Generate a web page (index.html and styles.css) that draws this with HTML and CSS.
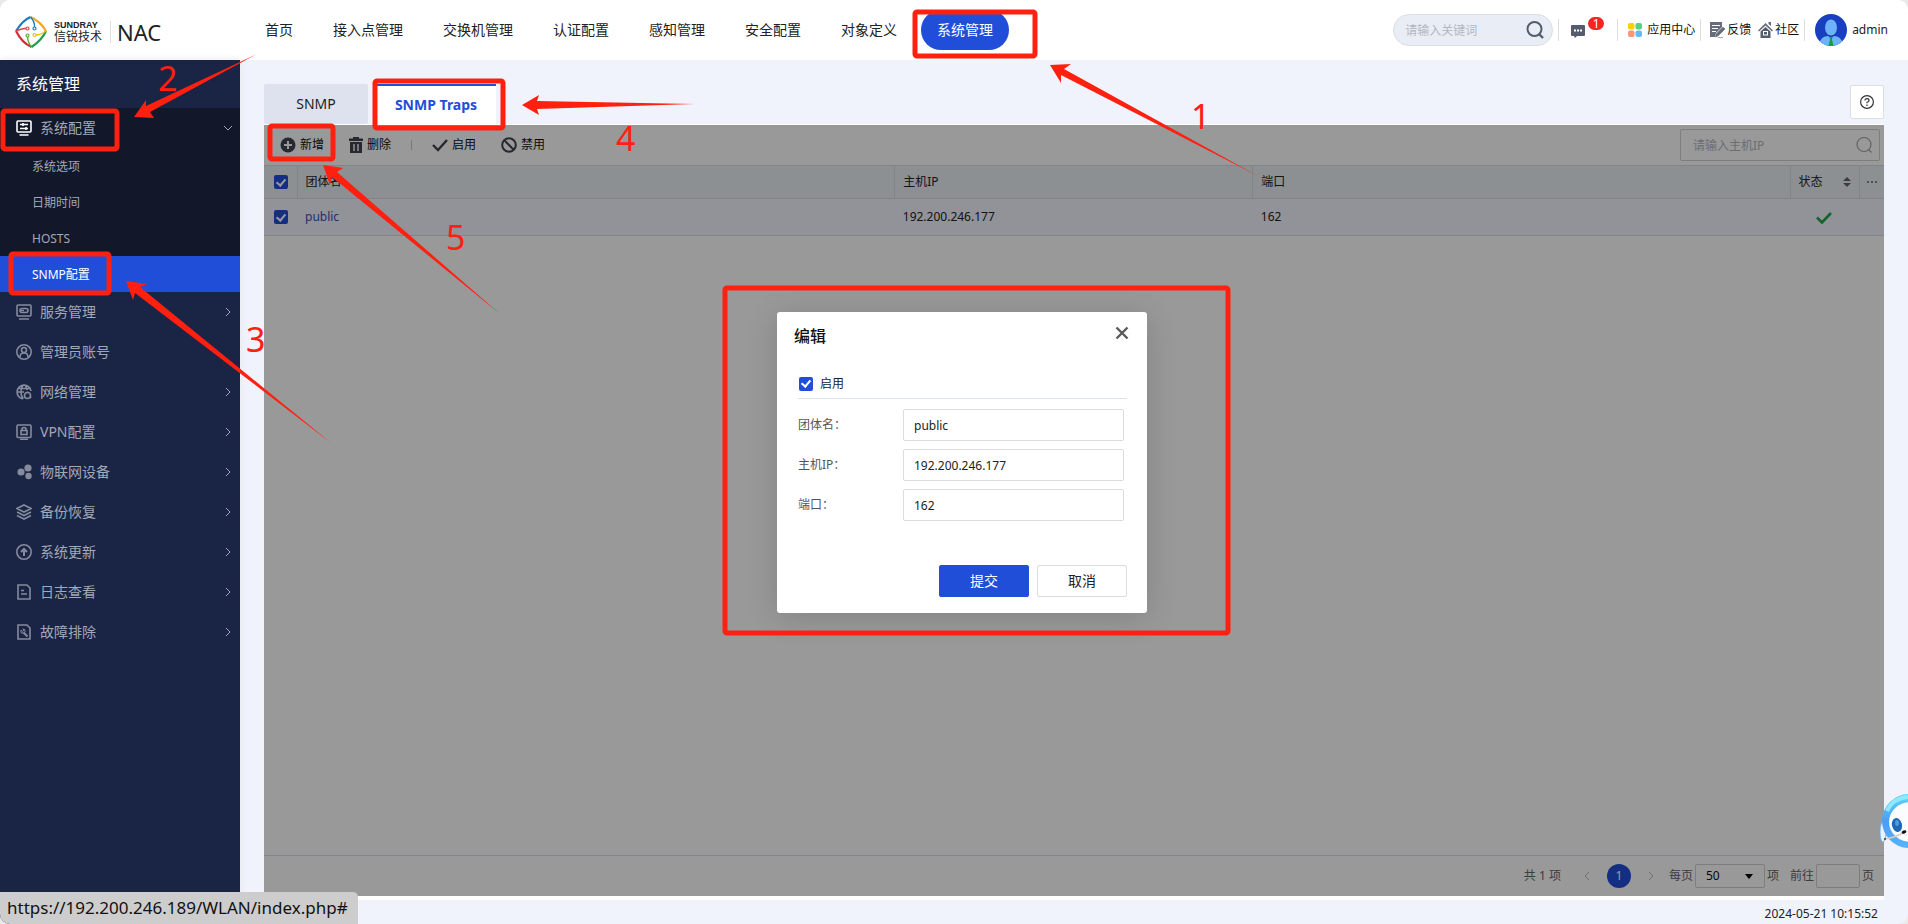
FILE: index.html
```html
<!DOCTYPE html>
<html lang="zh-CN">
<head>
<meta charset="utf-8">
<title>NAC</title>
<link rel="stylesheet" href="styles.css">
</head>
<body>
<div class="app">
  <header class="topbar">
    <div class="brand">
      <svg class="brand-mark" viewBox="0 0 32 32" fill="none" stroke-width="2.200">
        <path d="M1 15Q8 4 15.500 1" stroke="#1a7dc4"/>
        <path d="M15.500 1Q25 5 31 15" stroke="#f2a81d"/>
        <path d="M31 15Q27 24 16.500 31" stroke="#1f9d4d"/>
        <path d="M16.500 31Q7 27 1 15" stroke="#d22c3c"/>
        <path d="M1 15Q7 12 11 12.500" stroke="#e0453a" stroke-width="1.400"/><circle cx="12.500" cy="12.500" r="1.500" stroke="#e0453a" stroke-width="1.200"/>
        <path d="M15.500 1Q20 6 19.500 11" stroke="#1a7dc4" stroke-width="1.400"/><circle cx="19.500" cy="12.500" r="1.500" stroke="#1a7dc4" stroke-width="1.200"/>
        <path d="M31 15Q26 19 21 19" stroke="#e8c11d" stroke-width="1.400"/><circle cx="19.500" cy="19" r="1.500" stroke="#e8c11d" stroke-width="1.200"/>
        <path d="M16.500 31Q13 27 12.500 21" stroke="#4fae3c" stroke-width="1.400"/><circle cx="12.500" cy="19.500" r="1.500" stroke="#4fae3c" stroke-width="1.200"/>
      </svg>
      <div class="brand-name"><span class="brand-en">SUNDRAY</span><span class="brand-cn">信锐技术</span></div>
      <span class="brand-product">NAC</span>
    </div>
    <nav class="nav">
      <a href="#">首页</a><a href="#">接入点管理</a><a href="#">交换机管理</a><a href="#">认证配置</a><a href="#">感知管理</a><a href="#">安全配置</a><a href="#">对象定义</a><a href="#" class="current">系统管理</a>
    </nav>
    <div class="tools">
      <div class="searchbox">
        <input type="text" placeholder="请输入关键词" aria-label="请输入关键词">
        <svg width="18" height="18" viewBox="0 0 18 18" fill="none" stroke="#555d6d" stroke-width="2"><circle cx="8.500" cy="8" r="7"/><path d="M13 13l4 4" stroke-width="2.400"/></svg>
      </div>
      <a href="#" class="messages" aria-label="1">
        <svg width="14" height="13" viewBox="0 0 14 13"><path d="M1 0h12a1 1 0 0 1 1 1v9a1 1 0 0 1-1 1H6l-2 2-1-2H1a1 1 0 0 1-1-1V1a1 1 0 0 1 1-1z" fill="#555d6d"/><path d="M3 4.500h2v2H3zM6 4.500h2v2H6zM9 4.500h2v2H9z" fill="#fff"/></svg>
        <span class="badge">1</span>
      </a>
      <a href="#" class="tool apps">
        <svg width="14" height="14" viewBox="0 0 14 14"><rect width="6.500" height="6.500" rx="2" fill="#fdd000"/><rect x="7.500" width="6.500" height="6.500" rx="2" fill="#57d182"/><rect y="7.500" width="6.500" height="6.500" rx="2" fill="#ff9478"/><rect x="7.500" y="7.500" width="6.500" height="6.500" rx="2" fill="#5fbcf5"/></svg>
        应用中心</a>
      <div class="links">
        <a href="#" class="tool tight">
          <svg width="15" height="16" viewBox="0 0 15 16"><path d="M0 0h12v5L6 11l-1 4H0z" fill="#666c79"/><path d="M2 3.500h8M2 6.500h6M2 9.500h4" stroke="#fff"/><path d="M13 5l2 2-7 7-2.500 1 .700-3zM8 15.500h5" fill="#666c79" stroke="#666c79" stroke-width=".600"/></svg>
          反馈</a>
        <a href="#" class="tool tight">
          <svg width="15" height="16" viewBox="0 0 15 16"><path d="M0 8.500L7.500 1 15 8.500l-1 1-6.500-6-6.500 6z" fill="#666c79"/><path d="M10.500 0h2.500v4l-2.500-2z" fill="#666c79"/><path d="M2.500 9.500l5-4.500 5 4.500V16h-10z" fill="#555d6d"/><rect x="5" y="9" width="5" height="4.500" fill="#fff"/><rect x="6" y="10" width="3" height="2.500" fill="#555d6d"/></svg>
          社区</a>
      </div>
      <a href="#" class="user">
        <svg width="32" height="32" viewBox="0 0 32 32"><defs><clipPath id="face"><circle cx="16" cy="16" r="16"/></clipPath></defs><g clip-path="url(#face)"><rect width="32" height="32" fill="#173fc0"/><ellipse cx="16" cy="13.500" rx="6" ry="8" fill="#6db2fb"/><path d="M4 30q2-8 9-8l3 2 3-2q7 0 9 8v2H4z" fill="#6db2fb"/><path d="M14.500 23h3l-.500 2.500L18.500 32h-5l1.500-6.500z" fill="#0fa33c"/></g></svg>
        admin</a>
    </div>
  </header>

  <div class="body">
    <aside class="sidebar">
      <h2>系统管理</h2>
      <div class="group open">
        <a href="#" class="item">
          <svg class="ico" viewBox="0 0 16 16"><rect x="1" y="1" width="14" height="11" rx="1"/><path d="M4 4.500h8M4 8.500h8M7 3v3M10 7v3M3.500 15h9"/></svg>
          <span>系统配置</span>
          <svg class="arrow" viewBox="0 0 10 10"><path d="M1 3l4 4 4-4"/></svg></a>
        <a href="#" class="sub">系统选项</a><a href="#" class="sub">日期时间</a><a href="#" class="sub">HOSTS</a><a href="#" class="sub active">SNMP配置</a>
      </div>
      <a href="#" class="item"><svg class="ico" viewBox="0 0 16 16"><rect x="1" y="1" width="14" height="11" rx="1"/><rect x="4" y="4.500" width="8" height="4" rx="2"/><path d="M5 6.500h3M3 15h10"/></svg><span>服务管理</span><svg class="arrow" viewBox="0 0 10 10"><path d="M3 1l4 4-4 4"/></svg></a>
      <a href="#" class="item"><svg class="ico" viewBox="0 0 16 16"><circle cx="8" cy="8" r="7.200"/><circle cx="8" cy="6" r="2.500"/><path d="M4 13q0-4 4-4t4 4"/></svg><span>管理员账号</span></a>
      <a href="#" class="item"><svg class="ico" viewBox="0 0 16 16"><path d="M15 7A7 7 0 1 0 7 15M1 8h7M2 4.500h12M7 1Q3 8 7 15M9 1q2 3 2 5"/><circle cx="11.500" cy="11.500" r="3"/><path d="M11.500 7.500v1M7.800 13.600l1-.600M14 13l1.300.700"/></svg><span>网络管理</span><svg class="arrow" viewBox="0 0 10 10"><path d="M3 1l4 4-4 4"/></svg></a>
      <a href="#" class="item"><svg class="ico" viewBox="0 0 16 16"><rect x="1" y="1" width="14" height="12.500" rx="1"/><rect x="5" y="6.500" width="6" height="4"/><path d="M6 6V5q0-1.500 2-1.500T10 5v1M4 15.200h8"/></svg><span>VPN配置</span><svg class="arrow" viewBox="0 0 10 10"><path d="M3 1l4 4-4 4"/></svg></a>
      <a href="#" class="item"><svg class="ico solid" viewBox="0 0 16 16"><circle cx="5" cy="8" r="3.600"/><circle cx="12" cy="4" r="3.600"/><circle cx="12.500" cy="12" r="3.200"/></svg><span>物联网设备</span><svg class="arrow" viewBox="0 0 10 10"><path d="M3 1l4 4-4 4"/></svg></a>
      <a href="#" class="item"><svg class="ico" viewBox="0 0 16 16"><path d="M8 1l7 3.500L8 8 1 4.500zM1 8l7 3.500L15 8M1 11.500L8 15l7-3.500"/></svg><span>备份恢复</span><svg class="arrow" viewBox="0 0 10 10"><path d="M3 1l4 4-4 4"/></svg></a>
      <a href="#" class="item"><svg class="ico" viewBox="0 0 16 16"><circle cx="8" cy="8" r="7.200"/><path d="M8 12V5M5 8l3-3 3 3" stroke-width="2"/></svg><span>系统更新</span><svg class="arrow" viewBox="0 0 10 10"><path d="M3 1l4 4-4 4"/></svg></a>
      <a href="#" class="item"><svg class="ico" viewBox="0 0 16 16"><path d="M2 1h9l3 3v11H2zM5 6.500h3M5 10h6"/></svg><span>日志查看</span><svg class="arrow" viewBox="0 0 10 10"><path d="M3 1l4 4-4 4"/></svg></a>
      <a href="#" class="item"><svg class="ico" viewBox="0 0 16 16"><path d="M2 1h9l3 3v11H2z"/><path d="M7.500 8.500l4 4" stroke-width="2"/><path d="M5 6l1.500 1.500L8 6 6.800 5Q9.500 5 9 7.500T5.500 9Q4.500 8 5 6z" stroke-width="1"/></svg><span>故障排除</span><svg class="arrow" viewBox="0 0 10 10"><path d="M3 1l4 4-4 4"/></svg></a>
    </aside>

    <main class="main">
      <div class="tabbar">
        <button type="button" class="tab">SNMP</button>
        <button type="button" class="tab selected">SNMP Traps</button>
        <button type="button" class="help" aria-label="帮助"><svg width="14" height="14" viewBox="0 0 14 14" fill="none" stroke="#333" stroke-width="1.200"><circle cx="7" cy="7" r="6.400"/><path d="M5 5.600Q5 3.700 7 3.700t2 1.700Q9 6.500 7 7.300v1M7 9.500v1.400"/></svg></button>
      </div>
      <section class="panel">
        <div class="toolbar">
          <button type="button"><svg width="16" height="16" viewBox="0 0 16 16"><circle cx="8" cy="8" r="7.500" fill="#414550"/><path d="M8 4v8M4 8h8" stroke="#fff" stroke-width="2"/></svg>新增</button>
          <button type="button"><svg width="14" height="16" viewBox="0 0 14 16" fill="#414550"><path d="M0 1.500h4V0h6v1.500h4V4H0z"/><path d="M1 5h12v11H1z"/><path d="M5 7v7M9 7v7" stroke="#fff" stroke-width="1.400"/></svg>删除</button>
          <span class="divider"></span>
          <button type="button"><svg width="16" height="16" viewBox="0 0 16 16" fill="none" stroke="#414550" stroke-width="2.400"><path d="M1 8l5 5L15 3"/></svg>启用</button>
          <button type="button"><svg width="16" height="16" viewBox="0 0 16 16" fill="none" stroke="#414550" stroke-width="2"><circle cx="8" cy="8" r="6.800"/><path d="M3.500 3.500l9 9"/></svg>禁用</button>
          <div class="filter"><input type="text" placeholder="请输入主机IP" aria-label="请输入主机IP"><svg width="16" height="16" viewBox="0 0 16 16" fill="none" stroke="#a5a5a5" stroke-width="1.200"><circle cx="8" cy="7.500" r="7"/><path d="M12.500 12.500l3 3"/></svg></div>
        </div>
        <table class="grid">
          <colgroup><col class="c-check"><col class="c-name"><col class="c-ip"><col><col class="c-state"><col class="c-more"></colgroup>
          <thead><tr>
            <th><input type="checkbox" class="check" checked aria-label="全选"></th><th>团体名</th><th>主机IP</th><th>端口</th>
            <th><span class="sortable">状态<svg width="8" height="10" viewBox="0 0 8 10" fill="#666"><path d="M4 0l4 4H0zM4 10l4-4H0z"/></svg></span></th>
            <th class="more"><svg width="10" height="2" viewBox="0 0 10 2" fill="#888"><path d="M0 0h2v2H0zM4 0h2v2H4zM8 0h2v2H8z"/></svg></th>
          </tr></thead>
          <tbody><tr>
            <td><input type="checkbox" class="check" checked aria-label="public"></td><td><a href="#">public</a></td><td>192.200.246.177</td><td>162</td>
            <td class="state"><svg width="16" height="12" viewBox="0 0 16 12" fill="none" stroke="#20a547" stroke-width="2.600"><path d="M1 5.500l5 5L15 1"/></svg></td><td></td>
          </tr></tbody>
        </table>
        <div class="pager">
          <span class="total">共 1 项</span>
          <button type="button" class="step" aria-label="上一页"><svg width="4" height="8" viewBox="0 0 4 8"><path d="M4 0L0 4l4 4"/></svg></button>
          <button type="button" class="page">1</button>
          <button type="button" class="step" aria-label="下一页"><svg width="4" height="8" viewBox="0 0 4 8"><path d="M0 0l4 4-4 4"/></svg></button>
          <label for="size">每页</label>
          <span class="size"><select id="size"><option>50</option></select><svg width="8" height="5" viewBox="0 0 8 5"><path d="M0 0h8L4 5z"/></svg></span>
          <span>项</span>
          <label for="goto" class="goto">前往</label><input id="goto" type="text" class="goto-input"><span>页</span>
        </div>
        <div class="mask"></div>
      </section>
      <footer class="clock">2024-05-21 10:15:52</footer>
    </main>
  </div>

  <div class="dialog-layer">
    <form class="dialog" role="dialog" aria-labelledby="dlg-title">
      <div class="dialog-head"><h3 id="dlg-title">编辑</h3>
        <button type="button" class="close" aria-label="关闭"><svg width="14" height="14" viewBox="0 0 14 14" stroke="#5b5b5b" stroke-width="2.400"><path d="M1.500 1.500l11 11M12.500 1.500l-11 11"/></svg></button></div>
      <div class="fields">
        <label class="enable"><input type="checkbox" class="check" checked>启用</label>
        <div class="field"><label for="f1">团体名：</label><input id="f1" type="text" value="public"></div>
        <div class="field"><label for="f2">主机IP：</label><input id="f2" type="text" value="192.200.246.177"></div>
        <div class="field"><label for="f3">端口：</label><input id="f3" type="text" value="162"></div>
      </div>
      <div class="actions"><button type="button" class="primary">提交</button><button type="button">取消</button></div>
    </form>
  </div>

  <svg class="mascot" viewBox="0 0 28 56">
    <defs><linearGradient id="ring" x1="0" y1="0" x2="0" y2="1"><stop offset="0" stop-color="#5fd9fb"/><stop offset=".5" stop-color="#4a9df5"/><stop offset="1" stop-color="#57b4fa"/></linearGradient></defs>
    <ellipse cx="3" cy="39" rx="3" ry="10" fill="#eaf2fb" stroke="#7db6ee"/>
    <circle cx="29" cy="28" r="27" fill="url(#ring)"/>
    <path d="M7 18Q13 5 28 4" fill="none" stroke="#8fe8fd" stroke-width="4"/>
    <ellipse cx="31" cy="29" rx="22" ry="20" fill="#fafcff"/>
    <ellipse cx="17" cy="32" rx="5" ry="7" fill="#1d67b5" transform="rotate(-15 17 32)"/><ellipse cx="17" cy="30" rx="2" ry="3" fill="#4e9be0"/>
    <path d="M4 46Q14 45 23 40" fill="none" stroke="#d8cfc8" stroke-width="1.500"/><ellipse cx="24" cy="39" rx="2.500" ry="1.500" fill="#111" transform="rotate(-20 24 39)"/><circle cx="5" cy="46" r="1" fill="#333"/>
  </svg>

  <svg class="marks" width="1908" height="924" viewBox="0 0 1908 924">
    <g fill="none" stroke="#ff2010" stroke-width="5">
      <rect x="915" y="12" width="120" height="44" rx="2"/><rect x="3" y="111" width="114" height="38" rx="2"/><rect x="11" y="254" width="98" height="39" rx="2"/><rect x="375" y="81" width="128" height="47" rx="2"/><rect x="270" y="126" width="63" height="33" rx="2"/><rect x="725" y="288" width="503" height="345" rx="2"/>
    </g>
    <g fill="#ff2010">
      <path d="M1050 65L1071 64 1064 69 1258 176 1061 75 1061 83z"/>
      <path d="M134 117L146 100 146 106 257 54 150 112 154 118z"/>
      <path d="M126 281L147 284 140 287 331 443 135 293 133 300z"/>
      <path d="M522 105L539 95 537 101 694 104 537 109 539 115z"/>
      <path d="M323 165L343 168 337 172 500 314 332 177 330 185z"/>
      <g class="digits"><text x="1191" y="129">1</text><text x="158" y="91">2</text><text x="246" y="352">3</text><text x="616" y="151">4</text><text x="446" y="250">5</text></g>
    </g>
  </svg>
  <div class="statusbar">https://192.200.246.189/WLAN/index.php#</div>
</div>
</body>
</html>
```

FILE: styles.css
```css
* { box-sizing: border-box; }
html { background: #e9e9e9; }
body { margin: 0; font: 12px/18px "Noto Sans", "Noto Sans CJK SC", sans-serif; color: #222; }
a { color: inherit; text-decoration: none; }
button, input, select { font: inherit; color: inherit; margin: 0; }
button { border: 0; padding: 0; background: none; cursor: pointer; }
svg { flex: none; display: block; }
.app { position: relative; display: flex; flex-direction: column; height: 100vh; overflow: hidden; border-radius: 10px; background: #f0f3fc; }

/* top bar */
.topbar { flex: none; display: flex; align-items: center; height: 60px; background: #fff; }
.brand { display: flex; align-items: center; width: 249px; padding: 3px 0 0 15px; color: #222; }
.brand-mark { width: 32px; height: 32px; }
.brand-name { display: flex; flex-direction: column; margin-left: 7px; padding-right: 8px; border-right: 1px solid #ddd; }
.brand-en { font: bold 9px/9px "Liberation Sans", sans-serif; }
.brand-cn { font-size: 12px; line-height: 13px; }
.brand-product { margin-left: 6px; font-size: 22px; line-height: 26px; }
.nav { display: flex; gap: 8px; }
.nav a { padding: 0 16px; font-size: 14px; line-height: 40px; border-radius: 20px; white-space: nowrap; }
.nav .current { background: #204ed9; color: #fff; }
.tools { display: flex; align-items: center; margin-left: auto; padding-right: 20px; }
.searchbox { position: relative; width: 160px; }
.searchbox input { width: 100%; height: 32px; padding: 0 40px 0 11px; border: 1px solid #dcdee3; border-radius: 16px; background: #e9edf6; }
.searchbox svg { position: absolute; right: 9px; top: 7px; }
input::placeholder { color: #b3b7c0; opacity: 1; }
.messages { position: relative; display: flex; align-items: center; width: 60px; height: 22px; margin-left: 5px; padding: 3px 0 0 12px; border: solid #ddd; border-width: 0 1px; }
.badge { position: absolute; left: 29px; top: -2px; width: 16px; height: 13px; border-radius: 7px; background: #f82323; color: #fff; line-height: 13px; text-align: center; }
.tool { display: flex; align-items: center; gap: 5px; white-space: nowrap; color: #111; }
.tool.tight { gap: 2px; }
.apps { width: 83px; padding-left: 10px; height: 22px; border-right: 1px solid #ddd; }
.links { display: flex; gap: 7px; width: 104px; height: 22px; padding-left: 9px; border-right: 1px solid #ddd; }
.user { display: flex; align-items: center; gap: 5px; margin-left: 10px; }

/* side menu */
.body { flex: 1; display: flex; min-height: 0; }
.sidebar { flex: none; width: 240px; background: #1a2546; color: #a3a8b5; box-shadow: 0 0 8px #e8e8ec; }
.sidebar h2 { margin: 0; padding-left: 16px; font-size: 16px; line-height: 48px; font-weight: 400; color: #fff; }
.open { background: #12172a; }
.item { display: flex; align-items: center; gap: 8px; height: 40px; padding: 0 7px 0 16px; font-size: 14px; }
.item .arrow { width: 10px; height: 10px; margin-left: auto; fill: none; stroke: #a3a8b5; }
.ico { width: 16px; height: 16px; fill: none; stroke: #858b9b; stroke-width: 1.6; }
.ico.solid { fill: #858b9b; stroke: none; }
.open .ico { stroke: #fff; }
.sub { display: block; height: 36px; padding: 1px 0 0 32px; line-height: 36px; }
.active { background: #204ed9; color: #fff; }

/* content */
.main { flex: 1; min-width: 0; display: flex; flex-direction: column; padding: 24px 24px 0; }
.tabbar { display: flex; gap: 8px; height: 40px; }
.tab { width: 104px; border-radius: 2px; background: #dee2ee; font-size: 14px; }
.selected { width: 120px; border-top: 2px solid #204ed9; border-radius: 0; background: #fff; color: #204ed9; font-weight: bold; }
.help { display: flex; align-items: center; justify-content: center; width: 34px; height: 34px; margin: 1px 0 0 auto; border: 1px solid #dcdee3; border-radius: 2px; background: #fff; }
.panel { position: relative; flex: 1; display: flex; flex-direction: column; padding: 1px 0 4px; background: #fff; }
.mask { position: absolute; inset: 1px 0 4px; background: rgba(0, 0, 0, .4); }
.toolbar { display: flex; align-items: center; height: 40px; padding: 0 4px 0 16px; }
.toolbar button { display: flex; align-items: center; gap: 4px; margin-right: 25px; color: #111; }
.divider { width: 1px; height: 10px; margin: 0 20px 0 -5px; background: #ccc; }
.filter { position: relative; width: 200px; margin-left: auto; }
.filter input { width: 100%; height: 32px; padding: 0 36px 0 12px; border: 1px solid #d0d0d0; border-radius: 2px; background: #fff; }
.filter svg { position: absolute; right: 8px; top: 8px; }
.grid { width: 100%; table-layout: fixed; border-collapse: collapse; }
.c-check { width: 33px; }
.c-name { width: 36.9%; }
.c-ip { width: 22.1%; }
.c-state { width: 69px; }
.c-more { width: 25px; }
.grid th { height: 33px; padding: 0 8px; border: 1px solid #dadde6; border-width: 1px 1px 1px 0; background: #ebf1f4; font-weight: 400; text-align: left; }
.grid td { height: 37px; padding: 0 8px; border-bottom: 1px solid #dadde6; background: #f4f5fe; }
.grid th:first-child, .grid td:first-child { padding: 0 0 0 10px; }
.grid a { color: #3250bd; }
.grid th:last-child { border-right: 0; padding: 0 7px; }
.sortable { display: flex; align-items: center; justify-content: space-between; }
.grid .state { padding: 2px 0 0 26px; }
.check { appearance: none; display: flex; align-items: center; justify-content: center; width: 14px; height: 14px; border-radius: 2px; background: #204ed9; }
.check::after { content: ""; width: 4px; height: 7px; margin-bottom: 2px; border: solid #fff; border-width: 0 2px 2px 0; transform: rotate(40deg); }
.pager { display: flex; align-items: center; justify-content: flex-end; gap: 2px; height: 41px; margin-top: auto; padding-right: 10px; border-top: 1px solid #dadde6; color: #666; }
.step { width: 12px; height: 24px; padding-left: 4px; }
.step svg { fill: none; stroke: #bbb; }
.total { margin-right: 18px; }
.page { width: 24px; height: 24px; margin: 0 12px; border-radius: 12px; background: #204ed9; color: #fff; }
.step + label { margin-left: 10px; }
.size { position: relative; width: 70px; color: #111; }
.size select { appearance: none; display: block; width: 100%; height: 24px; padding: 0 10px; border: 1px solid #d0d0d0; border-radius: 2px; background: #fff; }
.size svg { position: absolute; right: 12px; top: 10px; }
.goto { margin-left: 9px; }
.goto-input { width: 44px; height: 24px; border: 1px solid #d0d0d0; border-radius: 2px; background: #fff; }
.clock { height: 24px; padding: 5px 6px 0 0; text-align: right; }

/* dialog */
.dialog-layer { position: absolute; inset: 0; display: flex; align-items: center; justify-content: center; padding: 1px 0 0 16px; }
.dialog { width: 370px; padding: 12px 20px 16px; border-radius: 3px; background: #fff; box-shadow: 0 4px 32px rgba(0, 0, 0, .15); }
.dialog-head { display: flex; justify-content: space-between; height: 45px; }
.dialog-head h3 { margin: 0 0 0 -3px; font-size: 16px; line-height: 24px; font-weight: 500; color: #111; }
.close { width: 14px; height: 14px; margin: 2px -2px 0 0; }
.fields { display: flex; flex-direction: column; gap: 8px; padding-left: 1px; }
.enable { display: flex; align-items: center; gap: 7px; height: 30px; padding-left: 1px; margin-bottom: 2px; border-bottom: 1px solid #dde2f0; }
.field { display: flex; align-items: center; color: #555; }
.field label { width: 105px; }
.field input { flex: 1; min-width: 0; height: 32px; margin-right: 3px; padding: 0 10px; border: 1px solid #dcdcdc; border-radius: 2px; background: #fff; color: #222; }
.actions { display: flex; justify-content: flex-end; gap: 8px; margin-top: 44px; }
.actions button { width: 90px; height: 32px; border: 1px solid #dcdcdc; border-radius: 2px; background: #fff; font-size: 14px; }
.actions .primary { border-color: #204ed9; background: #204ed9; color: #fff; }

/* floating pieces */
.mascot { position: absolute; right: 0; bottom: 75px; width: 28px; height: 56px; }
.marks { position: absolute; left: 0; top: 0; pointer-events: none; }
.digits { font-size: 34px; }
.statusbar { position: absolute; left: 0; bottom: 0; padding: 0 10px 0 7px; border-radius: 0 5px 0 8px; background: #cdcdcd; color: #111; font-size: 17px; line-height: 32px; }
```
